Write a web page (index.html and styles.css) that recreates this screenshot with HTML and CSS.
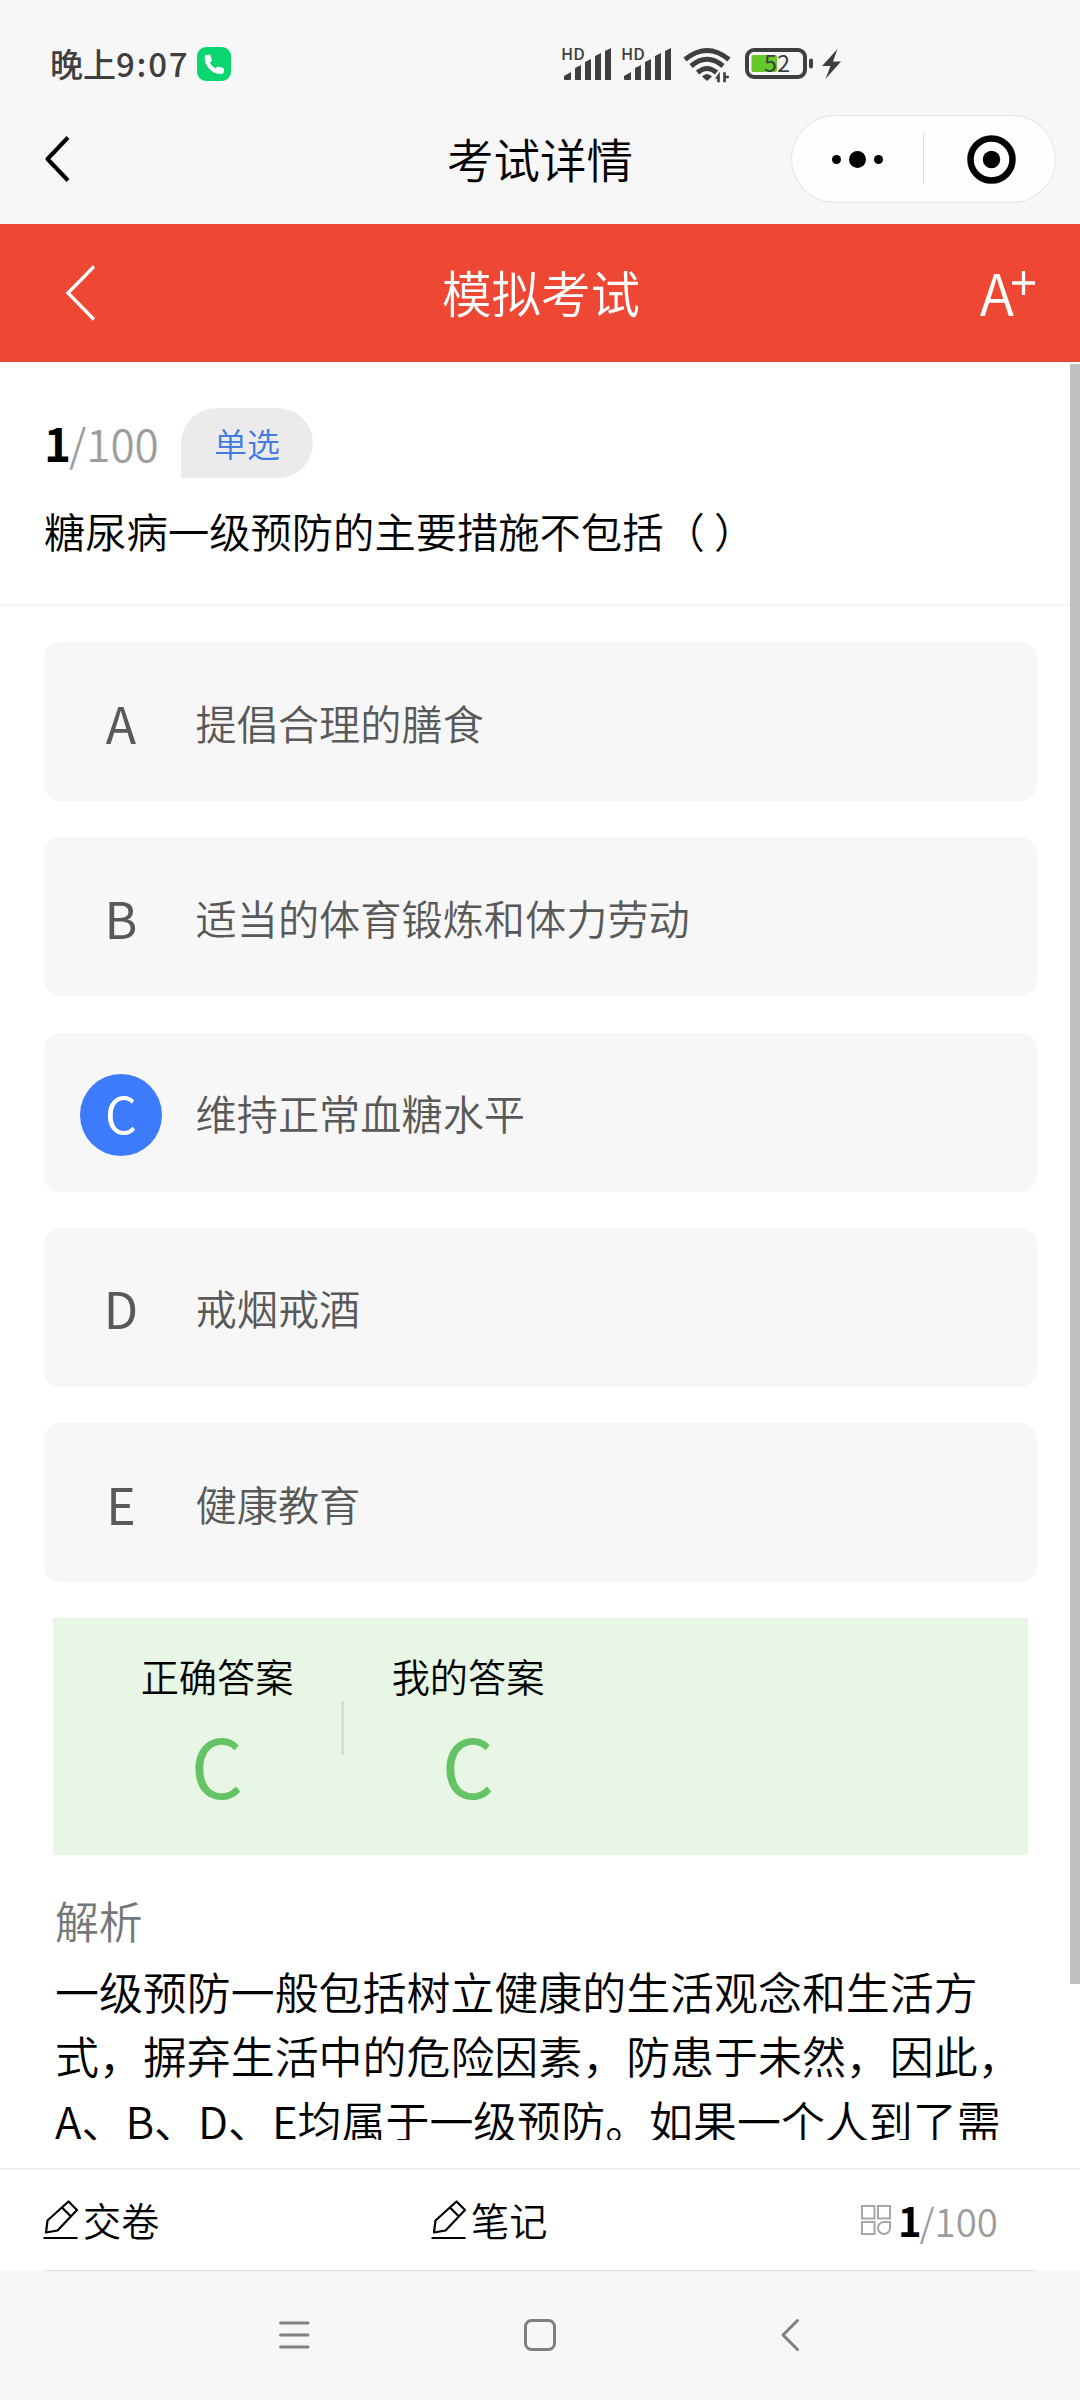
FILE: index.html
```html
<!DOCTYPE html>
<html lang="zh-CN">
<head>
    <meta charset="UTF-8">
    <meta name="viewport" content="width=device-width, initial-scale=1.0">
    <title>考试详情</title>
    <link rel="stylesheet" href="styles.css">
</head>
<body>

    <!-- Status bar -->
    <div class="status-bar">
        <div class="status-left">
            <span class="status-time">晚上<span class="clock">9:07</span></span>
            <svg class="call-icon" viewBox="0 0 34 34">
                <rect width="34" height="34" rx="9" fill="#0bd66f"/>
                <path d="M8.5 8.5 L13 8 L14.5 13.5 L12.5 15.5 C13.8 18.5 15.6 20.3 18.6 21.8 L20.8 20 L26.5 21.6 L26 26 C16 28.5 6.500 18.500 8.500 8.500Z" fill="#fff" stroke="#fff" stroke-width="1" stroke-linejoin="round"/>
            </svg>
        </div>
        <div class="status-right">
            <div class="signal">
                <span class="hd">HD</span>
                <svg width="50" height="34" viewBox="0 0 50 34">
                    <path d="M2 32v-3l7-4v7q0 1-1 1h-5q-1 0-1-1zM13 33v-12l6-3v15zM23 33v-18l6-3v21zM33 33v-24l6-3v27zM43 33v-29l6-3v32z" fill="#3f3f3f"/>
                </svg>
            </div>
            <div class="signal">
                <span class="hd">HD</span>
                <svg width="50" height="34" viewBox="0 0 50 34">
                    <path d="M2 32v-3l7-4v7q0 1-1 1h-5q-1 0-1-1zM13 33v-12l6-3v15zM23 33v-18l6-3v21zM33 33v-24l6-3v27zM43 33v-29l6-3v32z" fill="#3f3f3f"/>
                </svg>
            </div>
            <svg class="wifi" width="48" height="36" viewBox="0 0 48 36">
                <g fill="none" stroke="#3f3f3f" stroke-width="5">
                    <path d="M2 12.500Q24 -5.500 46 12.500"/>
                    <path d="M8 19Q24 5.500 40 19"/>
                    <path d="M14.500 25.500Q24 17.500 33.500 25.500"/>
                </g>
                <path d="M24 34l-5-4.500q5-5 10 0z" fill="#3f3f3f"/>
                <path d="M36.500 25.500v9.500h-2v-3.500h-2zM40.500 35v-9.500h2v3.500h3v2h-3v4z" fill="#3f3f3f" stroke="#3f3f3f" stroke-width=".6"/>
            </svg>
            <div class="battery">
                <svg width="70" height="32" viewBox="0 0 70 32">
                    <rect x="2" y="2" width="58" height="27" rx="7" fill="none" stroke="#3f3f3f" stroke-width="4"/>
                    <rect x="6.500" y="7" width="25.500" height="17" rx="2" fill="#62c927"/>
                    <rect x="64" y="10.500" width="4" height="10" rx="2" fill="#3f3f3f"/>
                </svg>
                <span class="battery-level">52</span>
            </div>
            <svg class="bolt" width="20" height="30" viewBox="0 0 20 30">
                <path d="M15.500 0L0 17h8.500L3.500 30L19 12.500h-8z" fill="#3f3f3f"/>
            </svg>
        </div>
    </div>

    <!-- Mini program title bar -->
    <div class="title-bar">
        <svg class="title-back" width="30" height="50" viewBox="0 0 30 50">
            <path d="M25 3.500L4.500 25L25 46.500" fill="none" stroke="#000" stroke-width="4" stroke-linejoin="round"/>
        </svg>
        <h1>考试详情</h1>
        <div class="capsule">
            <svg width="264" height="88" viewBox="0 0 264 88">
                <circle cx="45.500" cy="44.500" r="4.500"/>
                <circle cx="66.500" cy="44.500" r="8.500"/>
                <circle cx="87.500" cy="44.500" r="4.500"/>
                <path d="M132.500 18v52" stroke="#dcdcdc"/>
                <circle cx="200.500" cy="44.500" r="21" fill="none" stroke="#000" stroke-width="6.500"/>
                <circle cx="200.500" cy="44.500" r="8.700"/>
            </svg>
        </div>
    </div>

    <!-- Header -->
    <header>
        <svg class="header-back" width="32" height="58" viewBox="0 0 32 58">
            <path d="M29 2.500L3 29L29 55.500" fill="none" stroke="#fff" stroke-width="3.300"/>
        </svg>
        <h2>模拟考试</h2>
        <div class="font-size-btn">
            <span>A</span>
            <svg width="24" height="24" viewBox="0 0 24 24">
                <path d="M0 12h23M11.500 0v24" stroke="#fff" stroke-width="3.300"/>
            </svg>
        </div>
    </header>

    <!-- Question and answers, scrolls -->
    <main class="content">
        <div class="scrollbar"></div>

        <section class="question">
            <div class="question-meta">
                <div class="progress"><b>1</b>/100</div>
                <span class="type-badge">单选</span>
            </div>
            <p class="question-text">糖尿病一级预防的主要措施不包括（ ）</p>
        </section>

        <ul class="options">
            <li class="option"><span class="letter">A</span><span class="option-text">提倡合理的膳食</span></li>
            <li class="option"><span class="letter">B</span><span class="option-text">适当的体育锻炼和体力劳动</span></li>
            <li class="option selected"><span class="letter">C</span><span class="option-text">维持正常血糖水平</span></li>
            <li class="option"><span class="letter">D</span><span class="option-text">戒烟戒酒</span></li>
            <li class="option"><span class="letter">E</span><span class="option-text">健康教育</span></li>
        </ul>

        <section class="answers">
            <div class="answer">
                <span class="answer-label">正确答案</span>
                <span class="answer-value">C</span>
            </div>
            <div class="answer-divider"></div>
            <div class="answer">
                <span class="answer-label">我的答案</span>
                <span class="answer-value">C</span>
            </div>
        </section>

        <section class="analysis">
            <h3>解析</h3>
            <p>一级预防一般包括树立健康的生活观念和生活方<br>式，摒弃生活中的危险因素，防患于未然，因此，<br>A、B、D、E均属于一级预防。如果一个人到了需</p>
        </section>
    </main>

    <!-- Bottom toolbar -->
    <footer class="toolbar">
        <div class="tool">
            <svg class="pencil" width="36" height="40" viewBox="0 0 36 40">
                <g fill="none" stroke="#000" stroke-width="2.200" stroke-linejoin="round">
                    <path d="M3 32.500L4.500 20.500L25.500 1.500L34 10L14.500 30.500z"/>
                    <path d="M19 7.500L27.500 16"/>
                    <path d="M0.500 38h34"/>
                </g>
            </svg>
            <span>交卷</span>
        </div>
        <div class="tool">
            <svg class="pencil" width="36" height="40" viewBox="0 0 36 40">
                <g fill="none" stroke="#000" stroke-width="2.200" stroke-linejoin="round">
                    <path d="M3 32.500L4.500 20.500L25.500 1.500L34 10L14.500 30.500z"/>
                    <path d="M19 7.500L27.500 16"/>
                    <path d="M0.500 38h34"/>
                </g>
            </svg>
            <span>笔记</span>
        </div>
        <div class="tool tool-progress">
            <svg class="grid-icon" width="30" height="30" viewBox="0 0 30 30">
                <g fill="none" stroke="#a6a6a6" stroke-width="2">
                    <path d="M1 1h12.500v12.500h-12.500zM17 1h12v12.500h-12zM1 17h12.500v12h-12.500z"/>
                    <path d="M29 17h-6a6 6 0 1 0 6 6z"/>
                </g>
            </svg>
            <div class="progress"><b>1</b>/100</div>
        </div>
    </footer>

    <!-- System navigation -->
    <nav class="system-nav">
        <svg width="32" height="34" viewBox="0 0 32 34">
            <path d="M2.500 5h27.500M2.500 17h27.500M2.500 29h27.500" stroke="#808080" stroke-width="3" stroke-linecap="round"/>
        </svg>
        <svg class="nav-home" width="34" height="34" viewBox="0 0 34 34">
            <rect x="2.500" y="2.500" width="29" height="29" rx="6" fill="none" stroke="#808080" stroke-width="3"/>
        </svg>
        <svg width="20" height="34" viewBox="0 0 20 34">
            <path d="M17.500 2.500L3 17L17.500 31.500" fill="none" stroke="#808080" stroke-width="3" stroke-linecap="round" stroke-linejoin="round"/>
        </svg>
    </nav>

</body>
</html>
```
FILE: styles.css
```css
/* Global Styles */
* {
    box-sizing: border-box;
}

body {
    margin: 0;
    width: 1080px;
    height: 2400px;
    overflow: hidden;
    display: flex;
    flex-direction: column;
    font-family: "Noto Sans CJK SC", sans-serif;
    font-weight: 350;
    background-color: #f7f7f7;
    color: #000;
}

h1, h2, h3, p, ul {
    margin: 0;
    padding: 0;
    font-weight: inherit;
}

svg {
    display: block;
    flex-shrink: 0;
}

/* Status Bar */
.status-bar {
    height: 104px;
    padding: 24px 0 0 50px;
    display: flex;
    color: #3f3f3f;
}

.status-left {
    width: 511px;
    height: 80px;
    display: flex;
    align-items: center;
}

.status-time {
    width: 147px;
    font-size: 33px;
    font-weight: 500;
    line-height: 40px;
    padding-bottom: 2px;
    white-space: nowrap;
}

.clock {
    letter-spacing: 1.8px;
}

.call-icon {
    width: 34px;
    height: 34px;
}

.status-right {
    height: 80px;
    display: flex;
    align-items: center;
}

.signal {
    width: 60px;
    padding-left: 1px;
    position: relative;
}

.hd {
    position: absolute;
    left: 0;
    top: 0;
    font-size: 16.5px;
    font-weight: 500;
    line-height: 13px;
}

.wifi {
    margin: 2px 14px 0 2px;
}

.battery {
    position: relative;
    width: 77px;
}

.battery-level {
    position: absolute;
    left: 0;
    top: 0;
    width: 64px;
    text-align: center;
    font-size: 23.5px;
    font-weight: 400;
    line-height: 29px;
}

/* Title Bar */
.title-bar {
    height: 120px;
    padding: 11px 24px 0 43px;
    display: grid;
    grid-template-columns: 265px 1fr 265px;
    align-items: start;
}

.title-back {
    margin-top: 19px;
}

.title-bar h1 {
    font-size: 46.5px;
    line-height: 86px;
    text-align: center;
    padding-right: 19px;
}

.capsule {
    height: 88px;
    border-radius: 44px;
    background-color: #fefefe;
    box-shadow: inset 0 0 0 1px #e4e4e4;
}

/* Header */
header {
    height: 138px;
    background-color: #ee4733;
    color: #fff;
    padding: 0 44px 0 65px;
    display: grid;
    grid-template-columns: 120px 1fr 120px;
    align-items: center;
}

.header-back {
    margin-bottom: 1px;
}

header h2 {
    font-size: 49.5px;
    line-height: 70px;
    text-align: center;
    padding: 0 19px 2px 0;
}

.font-size-btn {
    display: flex;
    justify-content: flex-end;
    padding-bottom: 5px;
}

.font-size-btn span {
    font-size: 57px;
    font-weight: 350;
    line-height: 70px;
}

.font-size-btn svg {
    margin: 15px 0 0 -2px;
}

/* Content */
.content {
    position: relative;
    height: 1778px;
    overflow: hidden;
    background-color: #fff;
}

.scrollbar {
    position: absolute;
    top: 2px;
    right: 0;
    width: 10px;
    height: 1620px;
    background-color: #c0c0c0;
}

.question {
    height: 244px;
    padding: 46px 44px 0;
    border-bottom: 2px solid #f5f5f5;
}

.question-meta {
    display: flex;
    height: 70px;
}

.progress {
    color: #9d9d9d;
    font-size: 44px;
    line-height: 68px;
    white-space: nowrap;
}

.progress b {
    color: #000;
    font-weight: 700;
    font-size: 1.04em;
    letter-spacing: -2px;
}

.question-meta .progress {
    width: 137px;
}

.type-badge {
    width: 132px;
    height: 70px;
    border-radius: 35px 35px 35px 0;
    background-color: #ebebeb;
    color: #457ae2;
    font-size: 33px;
    line-height: 70px;
    text-align: center;
}

.question-text {
    font-size: 41.3px;
    line-height: 60px;
    margin-top: 22px;
}

/* Options */
.options {
    list-style: none;
    padding: 36px 43px 0 44px;
    display: flex;
    flex-direction: column;
    gap: 36.3px;
}

.option {
    height: 159px;
    padding: 6px 36px 0;
    border-radius: 16px;
    background-color: #f7f7f7;
    color: #595959;
    display: flex;
    align-items: center;
    gap: 33.5px;
}

.letter {
    width: 82px;
    height: 82px;
    border-radius: 50%;
    font-size: 50px;
    font-weight: 400;
    line-height: 77px;
    text-align: center;
}

.selected .letter {
    background-color: #3d7bfd;
    color: #fff;
}

.option-text {
    font-size: 41.2px;
    line-height: 76px;
    padding-bottom: 6px;
}

/* Answers */
.answers {
    width: 975px;
    height: 237px;
    margin: 36px 0 0 53px;
    padding: 28px 0 0 40px;
    background-color: #e8f6e5;
    display: flex;
}

.answer {
    width: 248px;
    display: flex;
    flex-direction: column;
    align-items: center;
}

.answer-label {
    font-size: 38.2px;
    line-height: 60px;
}

.answer-value {
    color: #64c364;
    font-size: 82px;
    font-weight: 400;
    line-height: 90px;
    margin-top: 13px;
}

.answer-divider {
    width: 3px;
    height: 54px;
    margin-top: 55px;
    background-color: #dadcda;
}

/* Analysis */
.analysis {
    padding: 33px 0 0 55px;
}

.analysis h3 {
    color: #757878;
    font-size: 43.8px;
    line-height: 64px;
}

.analysis p {
    font-size: 43.95px;
    line-height: 64.3px;
    margin-top: 7px;
    white-space: nowrap;
}

/* Toolbar */
.toolbar {
    position: relative;
    height: 130px;
    border-top: 28px solid #fff;
    background-color: #fff;
    padding-left: 43px;
    display: flex;
    align-items: center;
}

.toolbar::before {
    content: "";
    position: absolute;
    left: 0;
    right: 0;
    top: 0;
    height: 2px;
    background-color: #efefef;
}

.toolbar::after {
    content: "";
    position: absolute;
    left: 46px;
    right: 46px;
    bottom: -1px;
    height: 1px;
    background-color: #dcdcdc;
}

.tool {
    width: 388px;
    display: flex;
    align-items: center;
    font-size: 38.2px;
    line-height: 60px;
    padding-top: 1px;
}

.pencil {
    margin-right: 4px;
}

.grid-icon {
    margin-top: 1px;
}

.tool-progress {
    width: auto;
    margin-left: 42px;
}

.tool-progress .progress {
    margin-left: 7px;
    font-size: 38.4px;
    line-height: 60px;
}

/* System Navigation */
.system-nav {
    height: 130px;
    padding: 0 280px 0 278px;
    display: flex;
    align-items: center;
    justify-content: space-between;
}

.nav-home {
    margin-right: 10px;
}
```
